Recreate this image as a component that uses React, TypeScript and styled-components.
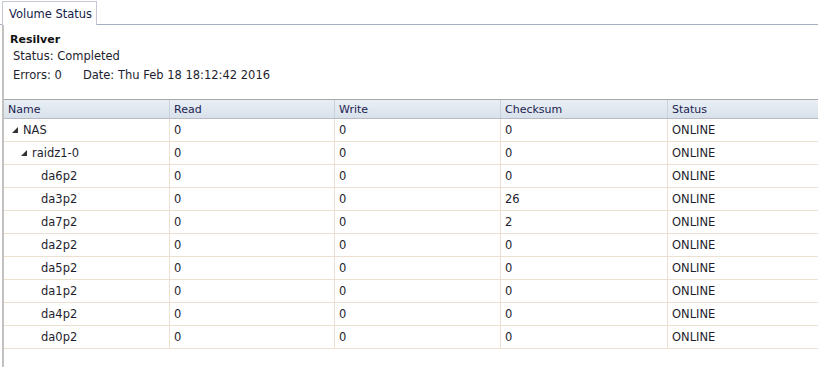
import React from "react";
import styled, {createGlobalStyle} from "styled-components";

//region Types
type Row = {
    name: string,
    level: number,
    expandable?: boolean,
    read: string,
    write: string,
    checksum: string,
    status: string
}
//endregion

const rows: Row[] = [
    {name: "NAS", level: 0, expandable: true, read: "0", write: "0", checksum: "0", status: "ONLINE"},
    {name: "raidz1-0", level: 1, expandable: true, read: "0", write: "0", checksum: "0", status: "ONLINE"},
    {name: "da6p2", level: 2, read: "0", write: "0", checksum: "0", status: "ONLINE"},
    {name: "da3p2", level: 2, read: "0", write: "0", checksum: "26", status: "ONLINE"},
    {name: "da7p2", level: 2, read: "0", write: "0", checksum: "2", status: "ONLINE"},
    {name: "da2p2", level: 2, read: "0", write: "0", checksum: "0", status: "ONLINE"},
    {name: "da5p2", level: 2, read: "0", write: "0", checksum: "0", status: "ONLINE"},
    {name: "da1p2", level: 2, read: "0", write: "0", checksum: "0", status: "ONLINE"},
    {name: "da4p2", level: 2, read: "0", write: "0", checksum: "0", status: "ONLINE"},
    {name: "da0p2", level: 2, read: "0", write: "0", checksum: "0", status: "ONLINE"},
];

const columns = ["Name", "Read", "Write", "Checksum", "Status"];
const GRID_COLS = "165px 165px 166px 167px 160px";

//region Styled
const GlobalStyle = createGlobalStyle`
    html, body {
        margin: 0;
        padding: 0;
        background: #fff;
        overflow: hidden;
    }
    body {
        font-family: "DejaVu Sans", Verdana, sans-serif;
        font-size: 11px;
        color: #1e1e2e;
    }
`;

const Page = styled.div`
    width: 818px;
    height: 367px;
    display: flex;
    flex-direction: column;
    overflow: hidden;
`;

const TabBar = styled.div`
    height: 24px;
    display: flex;
    align-items: flex-end;
    padding-left: 2px;
    border-bottom: 1px solid #a8afc2;
`;

const Tab = styled.div`
    height: 24px;
    box-sizing: border-box;
    width: 95px;
    padding: 0 0 0 6px;
    display: flex;
    align-items: center;
    background: #fff;
    border: 1px solid #c4c8d2;
    border-bottom: none;
    margin-bottom: -1px;
    font-size: 11.5px;
    color: #15224a;
`;

const Panel = styled.div`
    flex: 1;
    margin-left: 2px;
    border-left: 2px solid #c2c2c2;
    display: flex;
    flex-direction: column;
`;

const Info = styled.div`
    padding: 8px 0 0 6px;
    height: 74px;
    box-sizing: border-box;
`;

const Title = styled.div`
    font-weight: bold;
    font-size: 11px;
    line-height: 13px;
    color: #111;
`;

const InfoLine = styled.div<{top: number}>`
    display: flex;
    gap: 21px;
    padding-left: 3px;
    margin-top: ${props => props.top}px;
    line-height: 14px;
    font-size: 11.5px;
`;

const Grid = styled.div`
    display: flex;
    flex-direction: column;
`;

const HeaderRow = styled.div`
    display: grid;
    grid-template-columns: ${GRID_COLS};
    height: 20px;
    box-sizing: border-box;
    border-top: 1px solid #a8a8a8;
    border-bottom: 1px solid #b8bcc2;
    background: linear-gradient(#eaeff5, #d8e1ea);
`;

const HeaderCell = styled.div`
    display: flex;
    align-items: center;
    padding-left: 4px;
    padding-top: 1px;
    border-left: 1px solid #c9d1db;
    color: #1b2250;
    font-size: 11px;

    &:first-child {
        border-left: none;
    }
`;

const DataRow = styled.div`
    display: grid;
    grid-template-columns: ${GRID_COLS};
    height: 23px;
    box-sizing: border-box;
    border-bottom: 1px solid #ede0d0;
`;

const Cell = styled.div`
    display: flex;
    align-items: center;
    padding-left: 4px;
    border-left: 1px solid #ede0d0;
    font-size: 11.5px;

    &:first-child {
        border-left: none;
    }
`;

const NameCell = styled(Cell)<{level: number}>`
    padding-left: ${props => 8 + props.level * 9}px;
`;

const Arrow = styled.svg`
    width: 6px;
    height: 6px;
    margin-right: 5px;
    flex-shrink: 0;
`;

const Spacer = styled.span`
    display: inline-block;
    width: 11px;
`;
//endregion

const App = () => {
    return (
        <Page>
            <GlobalStyle/>
            <TabBar>
                <Tab>Volume Status</Tab>
            </TabBar>
            <Panel>
                <Info>
                    <Title>Resilver</Title>
                    <InfoLine top={3}>Status: Completed</InfoLine>
                    <InfoLine top={5}>
                        <span>Errors: 0</span>
                        <span>Date: Thu Feb 18 18:12:42 2016</span>
                    </InfoLine>
                </Info>
                <Grid>
                    <HeaderRow>
                        {columns.map(c => <HeaderCell key={c}>{c}</HeaderCell>)}
                    </HeaderRow>
                    {rows.map(r => (
                        <DataRow key={r.name}>
                            <NameCell level={r.level}>
                                {r.expandable ? (
                                    <Arrow viewBox="0 0 6 6">
                                        <polygon points="6,0 6,6 0,6" fill="#333"/>
                                    </Arrow>
                                ) : <Spacer/>}
                                {r.name}
                            </NameCell>
                            <Cell>{r.read}</Cell>
                            <Cell>{r.write}</Cell>
                            <Cell>{r.checksum}</Cell>
                            <Cell>{r.status}</Cell>
                        </DataRow>
                    ))}
                </Grid>
            </Panel>
        </Page>
    );
};

export default App;
